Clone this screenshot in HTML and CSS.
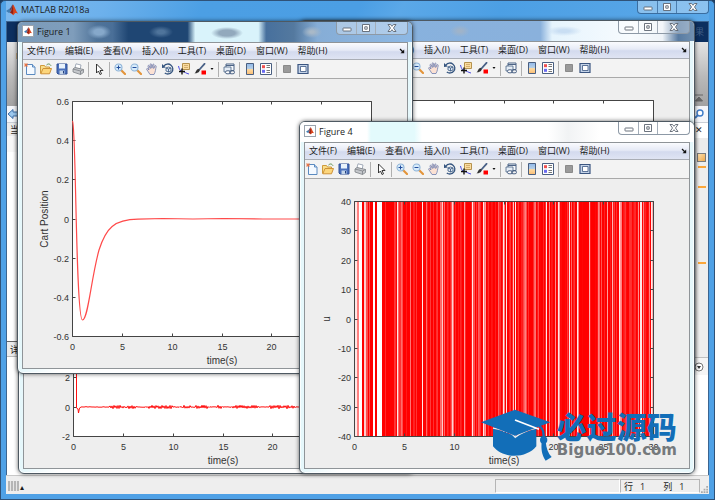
FILE: index.html
```html
<!DOCTYPE html>
<html lang="zh-CN">
<head>
    <meta charset="UTF-8">
    <meta name="viewport" content="width=device-width, initial-scale=1.0">
    <title>MATLAB R2018a</title>
    <link rel="stylesheet" href="styles.css">
</head>
<body>
    <svg class="sprite" aria-hidden="true">
        <defs>
            <linearGradient id="bar" x1="0" y1="0" x2="0" y2="1">
                <stop offset="0" stop-color="#8fb8ea"/>
                <stop offset=".5" stop-color="#b9d0e4"/>
                <stop offset=".55" stop-color="#ffd89c"/>
                <stop offset="1" stop-color="#f9bd76"/>
            </linearGradient>
        </defs>
        <symbol id="i-logo" viewBox="0 0 12 12">
            <path d="M0 7l3-2 2 2-2 2z" fill="#3f7fb5"/>
            <path d="M3 5c2-.6 2.500-4 4-4.500L5 8 3 9l2-2z" fill="#5b4b6f"/>
            <path d="M7 .5c1.500 1 2.500 6 5 9C10 8.500 9 8.500 7.500 11 7 12 6 9 4 9 6 7 6 3 7 .5z" fill="#d9441c"/>
            <path d="M7 .5c0 3 .5 7 0 10-.5-1-1.500-1.500-3-1.500C6 7 6 3 7 .5z" fill="#8d1f16"/>
        </symbol>
        <symbol id="i-new" viewBox="0 0 12 12">
            <path d="M2.500 1.500h6l2.500 2.500v7.500H2.500z" fill="#f4f9ff" stroke="#5a8ac0"/>
            <path d="M8.500 1.500V4H11" fill="#cfe0f4" stroke="#5a8ac0"/>
            <path d="M2 0v4M0 2h4M.5.5l3 3M3.500.5l-3 3" stroke="#e8703c" stroke-width=".8"/>
        </symbol>
        <symbol id="i-open" viewBox="0 0 12 12">
            <path d="M.5 10.500v-8h4l1 1.500h4v2" fill="#f8dd8a" stroke="#cf9b3c"/>
            <path d="M.8 10.800L3 5.500h8.500l-2 5.300z" fill="#fcd67c" stroke="#cf9238"/>
            <path d="M6.500 2c2-1.800 3.500-1 4.500.8" fill="none" stroke="#5b8f4f"/>
        </symbol>
        <symbol id="i-save" viewBox="0 0 12 12">
            <path d="M1 1h10v10H2l-1-1z" fill="#4a70bc" stroke="#2f4f94"/>
            <path d="M3 1h6v4.500H3z" fill="#e8f2fc"/>
            <path d="M3.500 7.500h5V11h-5z" fill="#c5d6ea"/>
            <path d="M7 8h1v2.500H7z" fill="#24407c"/>
        </symbol>
        <symbol id="i-print" viewBox="0 0 12 12">
            <path d="M4 .8l5 1.200-.8 4-5.200-1.200z" fill="#fff" stroke="#8b97a8" stroke-width=".8"/>
            <path d="M1 6l2-1.500 6.500 1.500 2 .5v3l-3 2L1 9z" fill="#c5c8cc" stroke="#7c8086" stroke-width=".8"/>
            <path d="M1 6l7.500 2 3-1.500M8.500 8v3.500" fill="none" stroke="#7c8086" stroke-width=".8"/>
        </symbol>
        <symbol id="i-pointer" viewBox="0 0 12 12">
            <path d="M3.500 1v9l2-2 1.500 3.500 1.500-.7L7 7.500h3z" fill="#fff" stroke="#222" stroke-width=".9"/>
        </symbol>
        <symbol id="i-zoomin" viewBox="0 0 12 12">
            <path d="M7 7l4 4" stroke="#e3943a" stroke-width="2.200" stroke-linecap="round"/>
            <circle cx="4.500" cy="4.500" r="3.500" fill="#d8ecfb" stroke="#8fb4d8" stroke-width="1.100"/>
            <path d="M4.500 2.500v4M2.500 4.500h4" stroke="#234e9c"/>
        </symbol>
        <symbol id="i-zoomout" viewBox="0 0 12 12">
            <path d="M7 7l4 4" stroke="#e3943a" stroke-width="2.200" stroke-linecap="round"/>
            <circle cx="4.500" cy="4.500" r="3.500" fill="#d8ecfb" stroke="#8fb4d8" stroke-width="1.100"/>
            <path d="M2.500 4.500h4" stroke="#234e9c"/>
        </symbol>
        <symbol id="i-pan" viewBox="0 0 12 12">
            <path d="M4 11.500C3 9.500 1.500 8 .7 6.500c-.4-1 .6-1.200 1.200-.6L3 7 2 3.200c-.2-1 .9-1.200 1.200-.3L4.300 5.500 4.200 1.500c0-1 1.200-1 1.300 0l.4 3.700L6.800 1.600c.3-.9 1.400-.7 1.200.3L7.700 5.500 9 3c.5-.8 1.500-.3 1.200.6-.7 2.400-.6 5.400-2.200 7.900z" fill="#fbe1d3" stroke="#6f7fb0" stroke-width=".8"/>
        </symbol>
        <symbol id="i-rotate" viewBox="0 0 12 12">
            <path d="M2 2.800A5 5 0 1 1 2.800 10" fill="none" stroke="#35557f" stroke-width="1.300"/>
            <path d="M0 1v4l4-.5z" fill="#35557f"/>
            <path d="M4 5l2.500-1L9 5v3L6.500 9 4 8zM4 5l2.500 1L9 5M6.500 6v3" fill="#dfe9f5" stroke="#35557f" stroke-width=".8"/>
        </symbol>
        <symbol id="i-cursor" viewBox="0 0 12 12">
            <path d="M4.500.5h7v6h-7z" fill="#fbdc9e" stroke="#b5924e"/>
            <path d="M6 2.500h4M6 4.500h4" stroke="#c9a363" stroke-width=".8"/>
            <path d="M.5 3c.5 3 2 5.500 4 5.500S8 10.500 11 11" fill="none" stroke="#4b4be0"/>
            <path d="M4 5.500v6M1 8.500h6" stroke="#111" stroke-width="1.400"/>
        </symbol>
        <symbol id="i-brush" viewBox="0 0 12 12">
            <path d="M10.500.8L5.500 6.500" stroke="#4a6288" stroke-width="1.800" stroke-linecap="round"/>
            <path d="M5.800 6.800c0 2.500-2.500 3.500-5.300 3.700C2 9.500 2 6.500 4.300 5.800z" fill="#333"/>
            <path d="M7.500 7.500H12v4H7.500z" fill="#f00"/>
        </symbol>
        <symbol id="i-caret" viewBox="0 0 4 12"><path d="M.5 5h3L2 7z" fill="#111"/></symbol>
        <symbol id="i-link" viewBox="0 0 12 12">
            <path d="M3 1h8v6.500H3zM3 2.500h8" fill="#f5f8fc" stroke="#4d6486"/>
            <path d="M1 4h7v5H1z" fill="#e5edf6" stroke="#4d6486" stroke-width=".8"/>
            <rect x="2.500" y="7.800" width="5" height="3" rx="1.500" fill="#fff" stroke="#4d6486"/>
            <rect x="6.500" y="7.800" width="5" height="3" rx="1.500" fill="none" stroke="#4d6486"/>
        </symbol>
        <symbol id="i-colorbar" viewBox="0 0 12 12">
            <path d="M2.500.5h7v11h-7z" fill="url(#bar)" stroke="#4a5f80"/>
        </symbol>
        <symbol id="i-legend" viewBox="0 0 12 12">
            <path d="M.5.5h11v11H.5z" fill="#fff" stroke="#4a5f80"/>
            <path d="M2 2.200h3v3H2z" fill="#f05050"/>
            <path d="M2 6.800h3v3H2z" fill="#6a6af0"/>
            <path d="M6.500 2.500h3.500M6.500 4.500h3.500M6.500 7.500h3.500M6.500 9.500h3.500" stroke="#777"/>
        </symbol>
        <symbol id="i-hide" viewBox="0 0 12 12">
            <path d="M2.500 2.500h7v7h-7z" fill="#9a9a9a" stroke="#8a8a8a"/>
        </symbol>
        <symbol id="i-dock" viewBox="0 0 12 12">
            <path d="M1 1.500h10v9H1z" fill="#c4d3e8" stroke="#3b5580" stroke-width="1.200"/>
            <path d="M3.500 3.500h5.500v5H3.500z" fill="#fff" stroke="#3b5580" stroke-width=".8"/>
        </symbol>
        <symbol id="i-corner" viewBox="0 0 6 6">
            <path d="M1 1l3 3" stroke="#111" stroke-width="1.300"/>
            <path d="M5.200 1.500v3.700H1.500z" fill="#111"/>
        </symbol>
        <symbol id="i-min" viewBox="0 0 10 8">
            <rect x="1" y="4" width="8" height="3" rx=".5" fill="#fff" stroke="#5c6470" stroke-width=".9"/>
        </symbol>
        <symbol id="i-max" viewBox="0 0 10 8">
            <path d="M1.500.5h7v7h-7z" fill="#fff" stroke="#5c6470" stroke-width=".9"/>
            <path d="M3.800 2.800h2.400v2.400H3.800z" fill="#fff" stroke="#5c6470" stroke-width=".9"/>
        </symbol>
        <symbol id="i-close" viewBox="0 0 10 8">
            <path d="M1 .5h2.500L5 2.300 6.500.5H9L6.500 4 9 7.500H6.500L5 5.700 3.500 7.500H1L3.500 4z" fill="#fff" stroke="#5c6470" stroke-width=".9"/>
        </symbol>
    </svg>

    <div class="matlab">
        <header class="titlebar">
            <svg class="logo"><use href="#i-logo"/></svg>
            <h1>MATLAB R2018a</h1>
            <div class="caption caption-blue">
                <button aria-label="最小化"><svg><use href="#i-min"/></svg></button>
                <button aria-label="最大化"><svg><use href="#i-max"/></svg></button>
                <button class="wide" aria-label="关闭"><svg><use href="#i-close"/></svg></button>
            </div>
        </header>

        <main class="workspace">
            <div class="strip-tabs"><span>果</span></div>
            <div class="strip">
                <svg class="strip-icon" viewBox="0 0 12 36">
                    <path d="M6 7h5v6H6z" fill="#f4d07e" stroke="#b98b3c"/>
                    <path d="M7 27h5M8 30h4M7 33h5M9 26v10" stroke="#333"/>
                </svg>
                <svg class="strip-fold" viewBox="0 0 10 8">
                    <path d="M1 1h8M1.500 7L5 3l3.500 4z" fill="#666" stroke="#666"/>
                </svg>
            </div>
            <div class="address">
                <svg class="back" viewBox="0 0 12 10">
                    <path d="M1 5l5-4.500V3h5v4H6v2.500z" fill="#9cc8ee" stroke="#3d6fa8"/>
                </svg>
                <svg class="search" viewBox="0 0 10 10">
                    <circle cx="6" cy="4" r="3" fill="#fff" stroke="#3e7cc8" stroke-width="1.400"/>
                    <path d="M4 6L1 9" stroke="#3e7cc8" stroke-width="1.800"/>
                </svg>
            </div>
            <div class="panels">
                <section class="folder">
                    <h2 class="tab">当前文件夹</h2>
                    <div class="list"></div>
                    <h2 class="detail">详细信息</h2>
                    <div class="detail-body"></div>
                </section>
                <section class="editor">
                    <div class="editor-head"><button aria-label="关闭编辑器">✕</button></div>
                    <div class="rail">
                        <i class="rail-box"></i>
                        <i class="mark"></i>
                        <i class="mark"></i>
                        <i class="mark far"></i>
                    </div>
                    <div class="command-head">
                        <svg viewBox="0 0 10 10">
                            <circle cx="5" cy="5" r="4" fill="#fff" stroke="#777"/>
                            <path d="M3 4h4L5 7z" fill="#333"/>
                        </svg>
                    </div>
                    <div class="command-body"></div>
                </section>
            </div>
        </main>

        <footer class="status">
            <div class="busy"><i class="grip"></i>▴</div>
            <div class="field"></div>
            <div class="position"><span>行&nbsp;&nbsp; 1</span><span>列&nbsp;&nbsp; 1</span></div>
            <svg class="resize" viewBox="0 0 8 8">
                <path d="M6 0h2v2H6zM3 3h2v2H3zM6 3h2v2H6zM0 6h2v2H0zM3 6h2v2H3zM6 6h2v2H6z" fill="#aaa"/>
            </svg>
        </footer>
    </div>

    <div id="desktop"></div>

    <div class="watermark">
        <svg viewBox="0 0 216 156">
            <path d="M36 56v56c30 38 100 38 130 0V58l-64 23z" fill="#126eb8"/>
            <path d="M36 57c34 6 58 14 67 28 14-12 34-22 63-28" fill="none" stroke="#eee" stroke-width="4"/>
            <path d="M0 40L102 2l106 38-106 40z" fill="#126eb8"/>
            <path d="M102 33l72 28" stroke="#fff" stroke-width="5"/>
            <path d="M174 50c14 8 14 22 14 38" fill="none" stroke="#126eb8" stroke-width="7"/>
            <circle cx="188" cy="93" r="11" fill="#126eb8"/>
            <path d="M182 98h12c2 20 8 36 18 46l-18 11c-12-18-14-36-12-57z" fill="#126eb8"/>
        </svg>
        <div>
            <p class="brand">必过源码</p>
            <p class="site">Biguo100.com</p>
        </div>
    </div>

    <script src="script.js"></script>
</body>
</html>
```
FILE: styles.css
```css
:root {
    --blue: #4fa1e6;
    --navy: #0c2f5f;
    --panel: #eeeeee;
    --ui: "Open Sans", "Noto Sans CJK SC", sans-serif;
    --plot: "Liberation Sans", Arial, sans-serif;
}

* {
    box-sizing: border-box;
}

body {
    margin: 0;
    height: 100vh;
    overflow: hidden;
    position: relative;
    font-family: var(--ui);
    font-size: 9px;
    color: #1c1c1c;
    background: #1d3c60;
}

h1, h2, p {
    margin: 0;
    font-size: 9px;
    font-weight: normal;
}

button {
    border: none;
    padding: 0;
    background: none;
    font: inherit;
    color: inherit;
}

svg {
    display: block;
}

.sprite {
    position: absolute;
    width: 0;
    height: 0;
}

/* main window */
.matlab {
    height: 100%;
    display: flex;
    flex-direction: column;
    padding: 0 5px 5px;
    border: 1px solid #2f5278;
    border-radius: 5px 5px 0 0;
    background: var(--blue);
}

.titlebar {
    display: flex;
    height: 20px;
    gap: 3px;
    background: linear-gradient(115deg, #7db9ee 0, #6db1ec 14%, #4c9fe4 28%, #4b9ee4 50%, #5ba8e8 56%, #4c9fe4 70%, #5ba8e8 100%);
}

.titlebar h1 {
    line-height: 18px;
    flex: 1;
}

.logo {
    width: 12px;
    height: 12px;
    margin-top: 3px;
}

.caption {
    display: flex;
    height: 13px;
    border: 1px solid #8d99a6;
    border-top: none;
    border-radius: 0 0 4px 4px;
    background: rgba(255, 255, 255, .3);
}

.caption button {
    width: 19px;
    display: flex;
    align-items: center;
    justify-content: center;
}

.caption button + button {
    border-left: 1px solid #a3adb8;
}

.caption .wide {
    width: 32px;
}

.caption svg {
    width: 10px;
    height: 8px;
}

.caption-blue {
    border-color: #3a6d9f;
}

.caption-blue button + button {
    border-color: #4a7dae;
}

.workspace {
    flex: 1;
    display: flex;
    flex-direction: column;
    border: 1px solid #3c6590;
    border-bottom: none;
    background: #fff;
    min-height: 0;
}

.strip-tabs {
    height: 20px;
    text-align: right;
    line-height: 20px;
    padding-right: 4px;
    color: #3f5e86;
    background: var(--navy);
}

.strip {
    height: 64px;
    display: flex;
    justify-content: space-between;
    align-items: flex-end;
    padding: 0 4px;
    background: linear-gradient(#e4e4e4, #b9b9b9 55%, #a2a2a2);
}

.strip-icon {
    width: 12px;
    height: 36px;
    align-self: flex-start;
    margin-top: 4px;
}

.strip-fold {
    width: 10px;
    height: 8px;
    margin-bottom: 4px;
}

.address {
    height: 17px;
    display: flex;
    justify-content: space-between;
    align-items: center;
    padding: 0 4px 0 0;
    background: #f4f6fa;
    border-bottom: 1px solid #c9ced6;
}

.back {
    width: 12px;
    height: 10px;
}

.search {
    width: 10px;
    height: 10px;
}

.panels {
    flex: 1;
    display: flex;
    min-height: 0;
}

.folder, .editor {
    flex: 1;
    display: flex;
    flex-direction: column;
}

.tab, .detail {
    height: 13px;
    line-height: 13px;
    padding-left: 3px;
    background: #ececec;
}

.list {
    flex: 1;
    border-top: 16px solid #f7f7f7;
}

.detail {
    height: 16px;
    line-height: 15px;
    border-top: 1px solid #666;
    border-bottom: 1px solid #bbb;
}

.detail-body {
    height: 118px;
}

.editor-head {
    height: 29px;
    text-align: right;
    padding: 0 5px;
    line-height: 14px;
    background: linear-gradient(#fff 15px, #ececec 15px);
}

.rail {
    flex: 1;
    display: flex;
    flex-direction: column;
    align-items: flex-end;
    gap: 18px;
    padding: 1px 2px;
    background: var(--panel);
}

.rail-box {
    width: 9px;
    height: 9px;
    border: 1px solid #7d7d7d;
    background: linear-gradient(135deg, #fde0ae, #f0a94c);
    margin-bottom: -14px;
}

.mark {
    width: 8px;
    height: 2px;
    background: #fba63a;
}

.far {
    margin-top: 56px;
}

.command-head {
    height: 18px;
    display: flex;
    justify-content: flex-end;
    align-items: center;
    padding-right: 4px;
    border-top: 1px solid #c0c0c0;
    background: #f5f5f5;
}

.command-head svg {
    width: 10px;
    height: 10px;
}

.command-body {
    height: 100px;
}

.status {
    height: 19px;
    display: flex;
    align-items: stretch;
    padding: 3px 0 1px 2px;
    border-top: 1px solid #c8c8c8;
    background: var(--panel);
}

.busy {
    flex: 1;
    display: flex;
    align-items: center;
    gap: 1px;
    font-size: 8px;
}

.grip {
    width: 11px;
    height: 10px;
    background: repeating-linear-gradient(90deg, #b5b5b5 0 2px, #e6e6e6 2px 3px);
}

.field {
    width: 125px;
    border: 1px solid #b5b5b5;
    border-right-color: #fff;
    border-bottom-color: #fff;
}

.position {
    width: 80px;
    display: flex;
    gap: 18px;
    padding-left: 3px;
    line-height: 13px;
    border: 1px solid #b5b5b5;
    border-bottom-color: #fff;
}

.resize {
    width: 7px;
    height: 7px;
    align-self: flex-end;
    margin: 0 1px;
}

/* figure windows float freely over the desktop */
.figure {
    position: absolute;
    width: 396px;
    padding: 0 4px 4px;
    border: 1px solid #4e5962;
    border-radius: 6px;
    background: linear-gradient(90deg, #e4f7fb, #fff 10%, #fff 85%, #e4f7fb);
    box-shadow: 0 0 4px rgba(0, 0, 0, .6), inset 0 0 0 1px rgba(255, 255, 255, .8);
}

.figure-1 { left: 17px; top: 21px; }
.figure-2 { left: 299px; top: 20px; }
.figure-3 { left: 18px; top: 121px; }
.figure-4 { left: 299px; top: 121px; }

.figure-head {
    height: 20px;
    display: flex;
    gap: 3px;
    margin: 0 -4px;
    padding: 0 4px;
    border-radius: 5px 5px 0 0;
}

.figure-head h2 {
    flex: 1;
    line-height: 19px;
}

.figure-head .logo {
    padding: 1px;
    border: 1px solid #9aa4ae;
    background: #fff;
}

/* aero glass tints: what shows through each title bar */
.figure-1 .figure-head {
    background:
        radial-gradient(ellipse 12px 7px at 81px 10px, #86a8ca 40%, transparent),
        radial-gradient(ellipse 12px 6px at 143px 10px, #4f749b 30%, transparent),
        radial-gradient(ellipse 16px 6px at 209px 11px, #92a9bd 50%, transparent),
        radial-gradient(ellipse 10px 6px at 294px 10px, #a9b9c8 20%, transparent),
        linear-gradient(90deg, #7c9cba 0, #7f9dbb 14%, #4f7399 20%, #4a6f98 24%, #1f4673 28%, #1f4673 43%, #d9f3fb 45%, #d9f3fb 61%, #47709d 63%, #54799f 70%, #86add6 76%, #8db8e4 100%);
}

.figure-2 .figure-head {
    background:
        radial-gradient(ellipse 10px 6px at 160px 10px, #9fb3c9 20%, transparent),
        radial-gradient(ellipse 18px 5px at 264px 10px, #c9def3 30%, transparent),
        linear-gradient(90deg, #86b2df 0, #8ab1dc 61%, #e6f4fd 64%, #f7fbfe 84%, #eef3f8 92%, #587ba2 96%, #7190b0 100%);
}

.figure-4 .figure-head {
    background: linear-gradient(90deg, #fff 0 17%, #e3fafc 18% 29%, #fff 31% 63%, #f1f3f4 68%, #fff 76%);
}

.figure-body {
    border: 1px solid #8f9498;
    background: var(--panel);
}

.menubar {
    height: 17px;
    display: flex;
    align-items: center;
    gap: 10px;
    padding: 0 2px 0 4px;
    background: linear-gradient(#fafbfe, #e6eaf6 45%, #d3daee 55%, #dfe4f3);
    border-bottom: 1px solid #a9adb5;
}

.menubar button {
    line-height: 14px;
    white-space: nowrap;
}

.menubar svg {
    width: 6px;
    height: 6px;
    margin-left: auto;
}

.toolbar {
    height: 19px;
    display: flex;
    align-items: center;
    gap: 4px;
    padding-left: 1px;
    background: #f3f3f3;
    border-bottom: 1px solid #a9a9a9;
}

.toolbar svg {
    width: 12px;
    height: 12px;
}

.toolbar .caret,
.toolbar .caret svg {
    width: 4px;
}

.toolbar i {
    width: 1px;
    height: 15px;
    background: #b0b0b0;
}

.plot {
    width: 100%;
    height: auto;
    font-family: var(--plot);
    font-size: 9px;
    fill: #333;
}

.plot .name {
    font-size: 10px;
}

.plot .mid { text-anchor: middle; }
.plot .end { text-anchor: end; }

.box {
    fill: none;
    stroke: #444;
}

.curve {
    fill: none;
    stroke: #ff4a4a;
    stroke-width: 1.2;
}

.noise {
    fill: none;
    stroke: #ff1010;
}

/* logo */
.watermark {
    position: absolute;
    right: 38px;
    bottom: 39px;
    display: flex;
    align-items: flex-start;
    gap: 4px;
    pointer-events: none;
}

.watermark svg {
    width: 72px;
    height: 52px;
}

.brand {
    font-family: "Noto Sans CJK SC", sans-serif;
    font-size: 30px;
    font-weight: 900;
    line-height: 32px;
    color: #126eb8;
}

.site {
    font-family: "DejaVu Sans", sans-serif;
    font-size: 15px;
    font-weight: bold;
    line-height: 18px;
    color: #75797c;
}
```
FILE: script.js
```js
const menus = ['文件(F)', '编辑(E)', '查看(V)', '插入(I)', '工具(T)', '桌面(D)', '窗口(W)', '帮助(H)'];

// '|' is a separator
const tools = ['new', 'open', 'save', 'print', '|', 'pointer', '|', 'zoomin', 'zoomout', 'pan',
    'rotate', 'cursor', 'brush', 'caret', '|', 'link', '|', 'colorbar', 'legend', '|', 'hide', 'dock'];

// plot box inside the 384x289 canvas
const L = 49.5, R = 348.5, T = 22.5, B = 257.5;

const icon = name => `<svg><use href="#i-${name}"/></svg>`;

// repeatable pseudo-random value, 0..1
const rnd = n => {
    const v = Math.sin(n * 12.9898) * 43758.5453;
    return v - Math.floor(v);
};

function axes(yLabels, yName) {
    let ticks = '';
    let labels = '';
    for (let i = 0; i <= 6; i++) {
        const x = Math.round(L + i * (R - L) / 6 - 0.5) + 0.5;
        ticks += `M${x} ${B}v-3M${x} ${T}v3`;
        labels += `<text class="mid" x="${x}" y="271">${i * 5}</text>`;
    }
    yLabels.forEach((label, i) => {
        const y = Math.round(T + i * (B - T) / (yLabels.length - 1) - 0.5) + 0.5;
        ticks += `M${L} ${y}h3M${R} ${y}h-3`;
        labels += `<text class="end" x="46" y="${y + 3}">${label}</text>`;
    });
    return `<path class="box" d="M${L} ${T}H${R}V${B}H${L}z${ticks}"/>${labels}
        <text class="name mid" x="199" y="285">time(s)</text>
        <text class="name mid" transform="translate(25 140) rotate(-90)">${yName}</text>`;
}

// Figure 1: cart position settles to zero
const cart = `<path class="curve" d="M49.5 42C51 44 51.500 70 52.500 110S55 241 59.500 241
    C65 241 68 200 76 171C83 149 91 140.500 115 140.200L140 139.500L170 140L200 139.500L240 140L348 140"/>`;

// Figure 3: small chatter around zero
function chatter() {
    let d = 'M50.5 30L52.500 60V229L54 230L54.500 234L55.500 229';
    for (let x = 57; x < 348; x++) {
        const burst = x > 78 && Math.sin(x * 0.36) + Math.sin(x * 0.15) > -0.4;
        const amp = burst ? 0.5 + rnd(x) * 1.3 : rnd(x) * 0.6;
        d += `L${x} ${(228 + (x % 2 ? amp : -amp)).toFixed(1)}`;
    }
    return `<path class="noise" d="${d}"/>`;
}

// Figure 4: bang-bang control, [x, width, whiteness] of the gaps in the red
const gaps = [[50, 2, .9], [52, 2, .5], [54, 3, 1], [59, 2, .8], [61, 2, .3], [64, 1, .3], [68, 2, 1],
    [72, 5, 1], [80, 1, .1], [92, 1, .9], [93, 1, .3], [96, 2, .3], [105, 1, .4], [117, 1, .9],
    [121, 1, .4], [125, 1, .2], [135, 2, .4], [137, 1, .8], [139, 1, .4], [146, 1, .3], [147, 1, .8],
    [148, 1, .4], [159, 1, .6], [167, 1, .9], [168, 2, .3], [173, 2, .3], [178, 1, .9], [179, 2, .5],
    [193, 1, .4], [198, 1, .9], [199, 1, .5], [201, 1, .9], [208, 1, .7], [210, 1, .9], [217, 2, .1],
    [219, 2, .4], [221, 1, .3], [229, 2, .4], [233, 1, .3], [241, 1, .9], [244, 1, .5], [250, 1, .5],
    [253, 1, .9], [254, 1, .5], [264, 1, .9], [266, 1, .4], [272, 1, .9], [273, 1, .5], [284, 1, .7],
    [293, 2, .4], [296, 1, .2], [302, 1, .5], [307, 1, .7], [314, 1, .9], [315, 2, .5], [324, 2, .2],
    [333, 1, .5], [335, 2, .9], [338, 1, .5], [344, 1, .5], [346, 1, .9], [347, 1, .7]];

function control() {
    const strip = (x, w, a) =>
        `<rect x="${x}" y="23" width="${w}" height="234" fill="#fff" fill-opacity="${a}"/>`;
    let out = `<rect x="50" y="${T}" width="299" height="${B - T}" fill="#f00"/>`;
    for (let x = 78; x < 345; x++) {
        if (rnd(x) > 0.6) out += strip(x, 1, (rnd(x + 500) * 0.22).toFixed(2));
    }
    return out + gaps.map(g => strip(...g)).join('');
}

const figures = [
    { n: 3, y: [14, 12, 10, 8, 6, 4, 2, 0, -2], name: 'Angle', data: chatter() },
    { n: 2, y: [0.6, 0.4, 0.2, 0, -0.2, -0.4, -0.6], name: 'Velocity', data: '' },
    { n: 1, y: [0.6, 0.4, 0.2, 0, -0.2, -0.4, -0.6], name: 'Cart Position', data: cart },
    { n: 4, y: [40, 30, 20, 10, 0, -10, -20, -30, -40], name: 'u', data: control() }
];

document.getElementById('desktop').innerHTML = figures.map(f => `
    <section class="figure figure-${f.n}">
        <div class="figure-head">
            <svg class="logo"><use href="#i-logo"/></svg>
            <h2>Figure ${f.n}</h2>
            <div class="caption">
                <button aria-label="最小化">${icon('min')}</button>
                <button aria-label="最大化">${icon('max')}</button>
                <button class="wide" aria-label="关闭">${icon('close')}</button>
            </div>
        </div>
        <div class="figure-body">
            <nav class="menubar">
                ${menus.map(m => `<button>${m}</button>`).join('')}
                ${icon('corner')}
            </nav>
            <div class="toolbar">
                ${tools.map(t => t === '|' ? '<i></i>' :
                    `<button class="${t}" aria-label="${t}">${icon(t)}</button>`).join('')}
            </div>
            <svg class="plot" viewBox="0 0 384 289">
                <rect x="${L}" y="${T}" width="${R - L}" height="${B - T}" fill="#fff"/>
                ${f.n === 4 ? f.data + axes(f.y, f.name) : axes(f.y, f.name) + f.data}
            </svg>
        </div>
    </section>`).join('');
```
